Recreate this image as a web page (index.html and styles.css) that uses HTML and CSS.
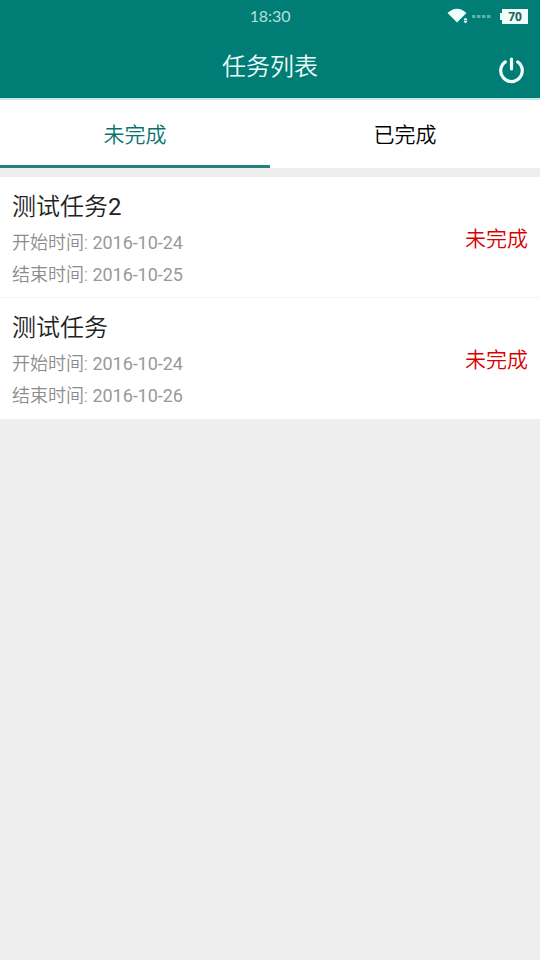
FILE: index.html
```html
<!DOCTYPE html>
<html lang="zh-CN">
<head>
<meta charset="utf-8">
<title>任务列表</title>
<link rel="stylesheet" href="styles.css">
</head>
<body>
<header class="top">
  <div class="status">
    <span></span>
    <span class="clock">18:30</span>
    <div class="indicators">
      <svg class="wifi" width="22" height="18" viewBox="0 0 22 18"><path d="M.5 5Q10 -3.500 19.500 5L10 14.500Z" fill="#effffc"/><rect x="16.500" y="9.500" width="4" height="6" rx="2" fill="#d9f5f0" stroke="#007d74"/><path d="M17.500 12.500h2" stroke="#007d74" stroke-width=".8"/></svg>
      <svg class="signal" width="20" height="4" viewBox="0 0 20 4" fill="#5fb0a9"><rect width="3.500" height="3"/><rect x="5" width="3.500" height="3"/><rect x="10" width="3.500" height="3"/><rect x="15" width="3.500" height="3"/></svg>
      <span class="nub"></span><span class="battery">70</span>
    </div>
  </div>
  <div class="titlebar">
    <span></span>
    <h1>任务列表</h1>
    <svg class="power" width="28" height="28" viewBox="0 0 28 28" fill="none" stroke="#effffc" stroke-width="3.200" stroke-linecap="round"><path d="M8.300 5.900A10.800 10.800 0 1 0 20.700 5.900M14.500 3V13"/></svg>
  </div>
</header>
<nav class="tabs">
  <div class="tab active">未完成</div>
  <div class="tab">已完成</div>
</nav>
<main class="list">
  <article class="task">
    <div class="info"><h2>测试任务<span class="num">2</span></h2><p>开始时间: <span class="num">2016-10-24</span></p><p>结束时间: <span class="num">2016-10-25</span></p></div>
    <span class="state">未完成</span>
  </article>
  <article class="task">
    <div class="info"><h2>测试任务</h2><p>开始时间: <span class="num">2016-10-24</span></p><p>结束时间: <span class="num">2016-10-26</span></p></div>
    <span class="state">未完成</span>
  </article>
</main>
</body>
</html>
```

FILE: styles.css
```css
* { box-sizing: border-box; }
body { margin: 0; min-height: 960px; background: #eee; font-family: Roboto, "Noto Sans CJK SC", sans-serif; font-weight: 350; }
h1, h2, p { margin: 0; font-weight: 350; }
.top { height: 98px; background: #007d74; color: #effffc; }
.status { height: 34px; display: grid; grid-template-columns: 1fr auto 1fr; align-items: center; padding: 0 12px; }
.clock { font: 400 16px/32px Lato, sans-serif; color: #b5e0da; margin-top: -2px; letter-spacing: -.1px; }
.indicators { display: flex; justify-content: flex-end; align-items: center; margin-top: -1px; }
.wifi { margin-right: -1px; }
.signal { margin: 0 8px 0 4px; }
.nub { width: 2px; height: 7px; background: #effffc; }
.battery { width: 26px; height: 15px; background: #effffc; color: #1d625c; font: 700 12px/15px "Open Sans", sans-serif; text-align: center; }
.titlebar { height: 64px; display: grid; grid-template-columns: 1fr auto 1fr; padding: 0 15px; }
h1 { font-size: 24px; line-height: 66px; }
.power { justify-self: end; margin-top: 22px; }
.tabs { display: flex; height: 70px; background: #fff; border-top: 2px solid #c9e7e4; }
.tab { flex: 1; text-align: center; font-size: 21px; line-height: 70px; color: #000; }
.active { color: #08736b; border-bottom: 3px solid #23807a; }
.list { margin-top: 9px; }
.task { height: 121px; display: flex; justify-content: space-between; padding: 12px 12px 0; background: #fff; border-bottom: 1px solid #f4f4f4; }
.task + .task { border-bottom: 0; }
h2 { font-size: 24px; line-height: 36px; color: #222; }
.info p:nth-child(2) { margin-top: 2px; }
p { font-size: 18px; line-height: 32px; color: #8c8c8c; }
.num { font-weight: 400; }
p .num { color: #999; letter-spacing: -.06px; margin-left: .3px; }
.state { color: #d90000; font-size: 21px; line-height: 32px; margin-top: 34px; }
```
